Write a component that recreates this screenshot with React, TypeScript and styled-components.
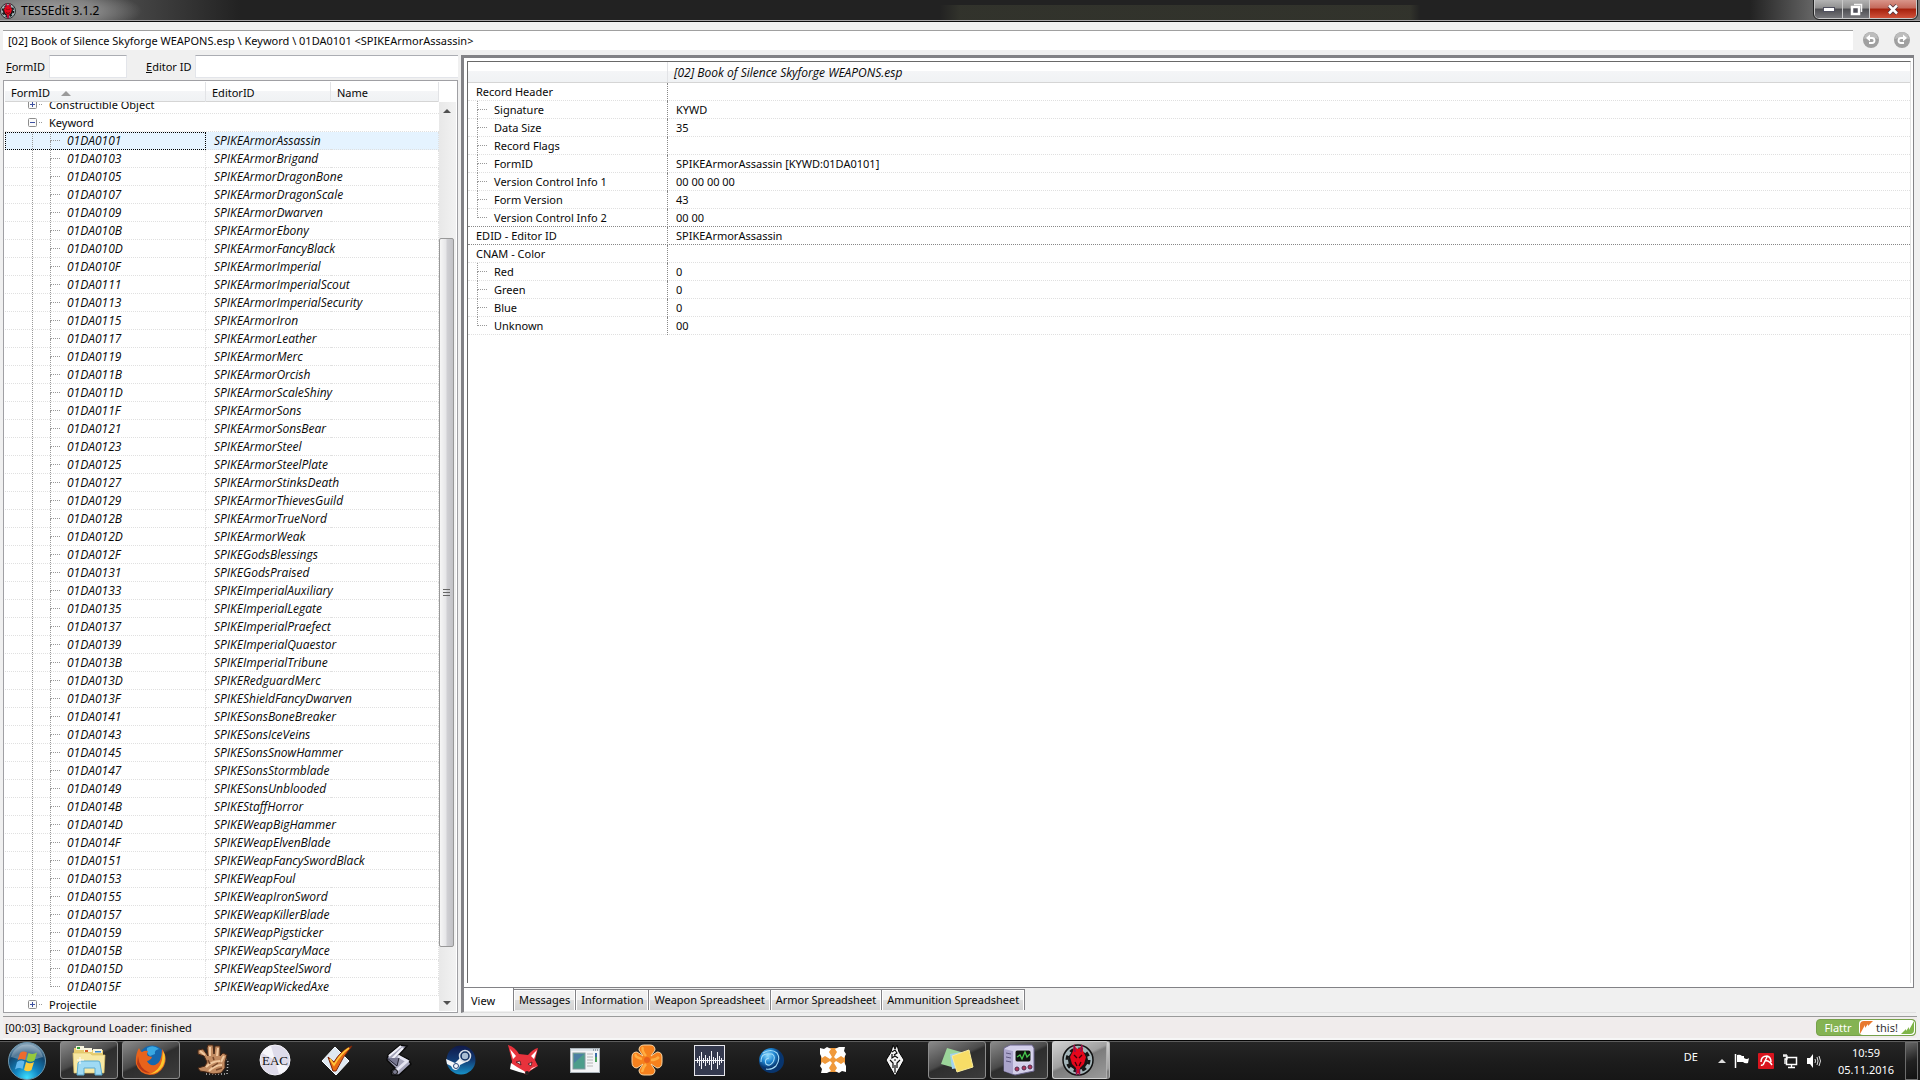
import React from 'react';
import styled, { createGlobalStyle, css } from 'styled-components';

const Global = createGlobalStyle`
  *, *::before, *::after { box-sizing: border-box; }
  html, body { margin: 0; }
  body { background: #f0f0f0; color: #080808; font: 11px/18px "Noto Sans", "Open Sans", sans-serif; overflow: hidden; }
  button, input { font: inherit; color: inherit; }
  button { padding: 0; border: 0; background: none; }
  svg { display: block; flex: none; }
`;

const italicText = css`
  font: italic 12px/18px "Open Sans", "Noto Sans", sans-serif;
`;

const Desktop = styled.div`
  min-height: 100vh;
  height: 100vh;
  display: flex;
  flex-direction: column;
`;

/* ---------- title bar ---------- */
const TitleBar = styled.header`
  flex: none;
  height: 22px;
  display: flex;
  justify-content: space-between;
  padding-right: 3px;
  border-bottom: 1px solid #0a0a0a;
  box-shadow: inset 0 -1px 0 #a5a3a5;
  background:
    radial-gradient(ellipse 90px 22px at 52px 11px, #a0a0a0, rgba(140, 140, 140, 0.8) 55%, transparent),
    linear-gradient(90deg, transparent 940px, rgba(60, 62, 50, 0.6) 960px, rgba(60, 62, 50, 0.6) 1410px, transparent 1420px) 0 5px no-repeat,
    linear-gradient(90deg, #6a6a6a, #4a4a4a 120px, #222 240px, #222 calc(100% - 170px), #6c6c6c calc(100% - 100px), #777);
`;
const AppTitle = styled.h1`
  margin: 0;
  display: flex;
  align-items: center;
  gap: 5px;
  font-size: 12px;
  line-height: 20px;
  font-weight: 400;
  color: #000;
`;
const Caption = styled.div`
  display: flex;
  height: 19px;
  border: 1px solid #c9c9c9;
  border-top: 0;
  border-radius: 0 0 5px 5px;
  overflow: hidden;
  outline: 1px solid #222;
`;
const CaptionButton = styled.button<{ $close?: boolean }>`
  width: ${p => (p.$close ? 47 : 27)}px;
  display: grid;
  place-items: center;
  background: ${p => p.$close
    ? 'linear-gradient(#d9958a, #c4685a 45%, #a5200c 50%, #d0513a)'
    : 'linear-gradient(#b4b4b4, #8f8f8f 45%, #4e4e52 50%, #77777b)'};
  & + & { border-left: 1px solid #c9c9c9; }
`;

/* ---------- path ---------- */
const PathRow = styled.div`
  flex: none;
  display: flex;
  align-items: center;
  gap: 10px;
  padding: 8px 10px 5px 3px;
`;
const PathInput = styled.input`
  flex: 1;
  height: 20px;
  padding: 0 5px;
  border: 0;
  border-top: 1px solid #a0a0a0;
  background: #fff;
  outline: 0;
`;
const NavButtons = styled.div`
  display: flex;
  gap: 15px;
`;

/* ---------- body ---------- */
const Body = styled.main`
  flex: 1;
  min-height: 0;
  display: flex;
  gap: 3px;
  padding: 0 4px 3px 3px;
`;
const Left = styled.section`
  width: 455px;
  flex: none;
  display: flex;
  flex-direction: column;
`;
const Filters = styled.form`
  display: flex;
  align-items: center;
  height: 25px;
  padding: 0 0 2px 3px;
`;
const FilterLabel = styled.label<{ $second?: boolean }>`
  width: ${p => (p.$second ? 49 : 43)}px;
  margin-left: ${p => (p.$second ? 19 : 0)}px;
  white-space: nowrap;
`;
const FilterInput = styled.input<{ $wide?: boolean }>`
  width: ${p => (p.$wide ? 'auto' : '78px')};
  flex: ${p => (p.$wide ? 1 : 'none')};
  min-width: 0;
  height: 23px;
  border: 1px solid #e3e5ea;
  border-top-color: #abadb3;
  ${p => p.$wide && 'border-right: 0;'}
  background: #fff;
  outline: 0;
`;

const headerFill = 'linear-gradient(#fff 45%, #f4f5f7 45%, #f0f2f4)';

const TreeBox = styled.div`
  flex: 1;
  min-height: 0;
  display: flex;
  flex-direction: column;
  border: 1px solid #a0a0a4;
  padding: 1px;
  background: #fff;
  overflow: hidden;
`;
const TreeArea = styled.div`
  flex: 1;
  min-height: 0;
  display: flex;
`;
const TreeScroll = styled.div`
  flex: 1;
  min-width: 0;
  overflow: hidden;
`;
const columns = css`
  display: grid;
  grid-template-columns: 201px 125px 1fr;
`;
const TreeTable = styled.table`
  display: block;
  border-spacing: 0;
  thead, tbody { display: block; }
`;
const TreeHead = styled.tr`
  ${columns}
  height: 20px;
  border-bottom: 1px solid #d5d5d5;
  background: ${headerFill};
`;
const TreeTh = styled.th`
  display: flex;
  align-items: center;
  gap: 11px;
  padding: 2px 6px 0;
  font-weight: 400;
  border-right: 1px solid #e2e3e6;
`;
const TreeRow = styled.tr<{ $selected?: boolean; $clipped?: boolean }>`
  ${columns}
  height: ${p => (p.$clipped ? 12 : 18)}px;
  align-content: end;
  overflow: hidden;
  background: ${p => (p.$selected ? '#e5f3ff' : 'transparent')};
`;
const TreeTd = styled.td<{ $focus?: boolean; $name?: boolean; $span?: boolean }>`
  display: flex;
  align-items: stretch;
  height: 18px;
  padding: 0 0 0 ${p => (p.$name ? 8 : 0)}px;
  border-bottom: 1px dotted #e0e0e0;
  border-right: ${p => (p.$span || p.$name ? '0' : '1px dotted #e0e0e0')};
  white-space: nowrap;
  ${p => (p.$span ? 'grid-column: 1 / -1;' : italicText)}
  ${p => p.$focus && 'outline: 1px dotted #000; outline-offset: -1px;'}
`;
const Indent = styled.span`
  width: 27px;
`;
const Guide = styled.span`
  width: 18px;
  border-left: 1px dotted #999;
`;
const Branch = styled.span<{ $last?: boolean }>`
  width: 17px;
  display: flex;
  flex-direction: column;
  &::before {
    content: '';
    width: 10px;
    height: 9px;
    border-left: 1px dotted #999;
    border-bottom: 1px dotted #999;
  }
  &::after {
    content: '';
    flex: 1;
    border-left: ${p => (p.$last ? '0' : '1px dotted #999')};
  }
`;
const Expander = styled.button`
  width: 21px;
  margin-left: 23px;
  display: flex;
  align-items: center;
`;

const Scrollbar = styled.div`
  width: 17px;
  flex: none;
  display: flex;
  flex-direction: column;
  margin-top: 20px;
  padding-right: 2px;
  background: linear-gradient(90deg, #e8e8e8, #f2f2f2);
`;
const ScrollButton = styled.button`
  height: 17px;
  display: grid;
  place-items: center;
`;
const Gap = styled.div<{ $grow: number }>`
  flex: ${p => p.$grow};
`;
const Thumb = styled.div`
  flex: 708;
  display: grid;
  place-items: center;
  border: 1px solid #989898;
  border-radius: 2px;
  background: linear-gradient(90deg, #f6f6f6, #e6e6e8 45%, #cfcfd3 55%, #c2c2c6);
`;

/* ---------- record view ---------- */
const Right = styled.section`
  flex: 1;
  min-width: 0;
  display: flex;
  flex-direction: column;
`;
const Page = styled.div`
  flex: 1;
  min-height: 0;
  border: 3px solid #828286;
  border-right: 1px solid #828286;
  border-bottom: 1px solid #828286;
  margin-right: 2px;
  padding: 3px 2px 4px 3px;
  background: #fff;
`;
const RecordBox = styled.div`
  height: 100%;
  border: 1px solid #696969;
  border-right-color: #e3e3e3;
  border-bottom: 0;
`;
const RecordTable = styled.table`
  display: block;
  border-spacing: 0;
  thead, tbody { display: block; }
`;
const recordColumns = css`
  display: grid;
  grid-template-columns: 200px 1fr;
`;
const RecordHead = styled.tr`
  ${recordColumns}
  height: 21px;
  border-bottom: 1px solid #d5d5d5;
  background: ${headerFill};
`;
const RecordTh = styled.th`
  ${italicText}
  padding: 2px 6px 0;
  text-align: left;
  &:first-child { border-right: 1px solid #e2e3e6; }
`;
const RecordRow = styled.tr<{ $strong?: boolean }>`
  ${recordColumns}
  height: 18px;
  border-bottom: 1px dotted ${p => (p.$strong ? '#888' : '#e0e0e0')};
`;
const RecordName = styled.td<{ $child?: boolean }>`
  display: flex;
  padding: 0 0 0 ${p => (p.$child ? 9 : 8)}px;
  border-right: 1px dotted #888;
`;
const RecordValue = styled.td`
  padding: 0 0 0 8px;
`;

const Tabs = styled.nav`
  flex: none;
  height: 25px;
  display: flex;
  align-items: flex-start;
  border-left: 3px solid #828286;
  border-bottom: 1px solid #e0e0e0;
`;
const Tab = styled.button<{ $active?: boolean }>`
  height: ${p => (p.$active ? 23 : 21)}px;
  margin-top: ${p => (p.$active ? 0 : 1)}px;
  padding: ${p => (p.$active ? '2px 18px 0 7px' : '0 5px')};
  line-height: 18px;
  border-right: 1px solid #828286;
  ${p => !p.$active && 'border-top: 1px solid #828286; box-shadow: inset 1px 1px 0 #fff, inset -1px 0 0 #fff;'}
  background: ${p => (p.$active ? '#fff' : 'linear-gradient(#f2f2f2 50%, #dedede 50%, #d3d3d3)')};
`;

/* ---------- status bar ---------- */
const StatusBar = styled.footer`
  flex: none;
  height: 24px;
  display: flex;
  align-items: flex-start;
  justify-content: space-between;
  margin: 0 3px;
  padding: 2px 1px 0 2px;
  border-top: 1px solid #9a9a9a;
  border-bottom: 2px solid #f6f6f6;
  background: #f0ecec;
`;
const Flattr = styled.a`
  display: flex;
  height: 17px;
  line-height: 15px;
  border: 1px solid #76a14a;
  border-radius: 4px;
  overflow: hidden;
  color: #fff;
  text-decoration: none;
  background: #84b352;
`;
const FlattrLeft = styled.span`
  width: 42px;
  text-align: center;
`;
const FlattrRight = styled.span`
  width: 56px;
  display: flex;
  justify-content: space-between;
  background: #fff;
  color: #333;
  border-radius: 4px;
`;

/* ---------- taskbar ---------- */
const Taskbar = styled.nav`
  flex: none;
  height: 40px;
  display: flex;
  padding-right: 2px;
  border-top: 1px solid #050505;
  box-shadow: inset 0 1px 0 #5c5c5c;
  background: linear-gradient(#262626, #1b1b1b 60%, #161616);
`;
const StartButton = styled.button`
  width: 60px;
  padding-left: 7px;
  display: flex;
  align-items: center;
`;
const Slots = styled.div`
  flex: 1;
  display: flex;
  gap: 4px;
`;
const Slot = styled.button<{ $state?: 'open' | 'active' }>`
  width: 58px;
  height: 38px;
  display: grid;
  place-items: center;
  border-radius: 3px;
  ${p => p.$state === 'open' && css`
    border: 1px solid #8c8c8c;
    background: linear-gradient(155deg, #8a8a8a, #4a4a4a 45%, #2e2e2e 50%, #3c3c3c);
  `}
  ${p => p.$state === 'active' && css`
    padding-right: 3px;
    border: 1px solid #d0d0d0;
    border-right: 4px double #b0b0b0;
    background: linear-gradient(155deg, #d2d2d2, #a0a0a0 45%, #7c7c7c 50%, #9a9a9a);
  `}
`;
const Tray = styled.div`
  display: flex;
  align-items: center;
  gap: 8px;
  color: #fff;
`;
const Language = styled.button`
  height: 26px;
  margin-right: 12px;
  align-self: flex-start;
  line-height: 32px;
`;
const Clock = styled.time`
  width: 62px;
  margin: 0 0 0 5px;
  text-align: center;
  line-height: 17px;
`;
const ShowDesktop = styled.button`
  width: 13px;
  height: 38px;
  border: 1px solid #6c6c6c;
  background: linear-gradient(160deg, #666, #222 50%, #111);
`;

/* ---------- data ---------- */
const editorIds = [
  'ArmorAssassin', 'ArmorBrigand', 'ArmorDragonBone', 'ArmorDragonScale', 'ArmorDwarven', 'ArmorEbony',
  'ArmorFancyBlack', 'ArmorImperial', 'ArmorImperialScout', 'ArmorImperialSecurity', 'ArmorIron', 'ArmorLeather',
  'ArmorMerc', 'ArmorOrcish', 'ArmorScaleShiny', 'ArmorSons', 'ArmorSonsBear', 'ArmorSteel', 'ArmorSteelPlate',
  'ArmorStinksDeath', 'ArmorThievesGuild', 'ArmorTrueNord', 'ArmorWeak', 'GodsBlessings', 'GodsPraised',
  'ImperialAuxiliary', 'ImperialLegate', 'ImperialPraefect', 'ImperialQuaestor', 'ImperialTribune', 'RedguardMerc',
  'ShieldFancyDwarven', 'SonsBoneBreaker', 'SonsIceVeins', 'SonsSnowHammer', 'SonsStormblade', 'SonsUnblooded',
  'StaffHorror', 'WeapBigHammer', 'WeapElvenBlade', 'WeapFancySwordBlack', 'WeapFoul', 'WeapIronSword',
  'WeapKillerBlade', 'WeapPigsticker', 'WeapScaryMace', 'WeapSteelSword', 'WeapWickedAxe',
];
const keywords = editorIds.map((name, i) => ({
  formId: '01DA0' + (0x101 + i * 2).toString(16).toUpperCase(),
  editorId: 'SPIKE' + name,
}));

type Field = { name: string; value?: string; child?: boolean; last?: boolean; strong?: boolean };
const fields: Field[] = [
  { name: 'Record Header' },
  { name: 'Signature', value: 'KYWD', child: true },
  { name: 'Data Size', value: '35', child: true },
  { name: 'Record Flags', child: true },
  { name: 'FormID', value: 'SPIKEArmorAssassin [KYWD:01DA0101]', child: true },
  { name: 'Version Control Info 1', value: '00 00 00 00', child: true },
  { name: 'Form Version', value: '43', child: true },
  { name: 'Version Control Info 2', value: '00 00', child: true, last: true, strong: true },
  { name: 'EDID - Editor ID', value: 'SPIKEArmorAssassin', strong: true },
  { name: 'CNAM - Color' },
  { name: 'Red', value: '0', child: true },
  { name: 'Green', value: '0', child: true },
  { name: 'Blue', value: '0', child: true },
  { name: 'Unknown', value: '00', child: true, last: true },
];
const tabs = ['View', 'Messages', 'Information', 'Weapon Spreadsheet', 'Armor Spreadsheet', 'Ammunition Spreadsheet'];

/* ---------- drawings ---------- */
const EditIcon = ({ size }: { size: number }) => (
  <svg width={size} height={size} viewBox="0 0 32 32">
    <circle cx="16" cy="16" r="15" fill="#a3b4b8" stroke="#111" strokeWidth="1.5" />
    <circle cx="16" cy="16" r="8" fill="none" stroke="#151515" strokeWidth="4" />
    <circle cx="16" cy="16" r="11" fill="none" stroke="#151515" strokeWidth="3" strokeDasharray="4.3 4.34" />
    <path d="M12 0 L14 4 L16 5 L18 4 L20 0 L21 7 L24 13 L22 20 L18 24 L18 31 L16 29 L14 31 L14 24 L10 20 L8 13 L11 7Z" fill="#e5071c" />
    <path d="M12 1 L13 8 M20 1 L19 8 M14.500 31 V25 M17.500 31 V25" stroke="#8a1552" strokeWidth="1.500" fill="none" />
    <path d="M12 11 L15 14 M20 11 L17 14 M13 18 L15 22 M19 18 L17 22" stroke="#3a0208" strokeWidth="1.300" fill="none" />
  </svg>
);
const NavIcon = ({ flip }: { flip?: boolean }) => (
  <svg width="16" height="16" viewBox="0 0 16 16">
    <circle cx="8" cy="8" r="8" fill="#a0a0a0" />
    <path d="M1 7 A7 7 0 0 1 15 7 Q8 4 1 7Z" fill="#bdbdbd" />
    <g transform={flip ? 'translate(16 0) scale(-1 1)' : undefined}>
      <path d="M6 6 H9 A2.500 2.500 0 0 1 9 11 H6" fill="none" stroke="#fff" strokeWidth="1.800" />
      <path d="M3 6 L7 2.500 V9.500Z" fill="#fff" />
    </g>
  </svg>
);
const BoxIcon = ({ plus }: { plus?: boolean }) => (
  <svg width="15" height="9" viewBox="0 0 15 9">
    <rect x=".5" y=".5" width="8" height="8" rx="1" fill="#fafafa" stroke="#8c8c8c" />
    <path d={plus ? 'M2 4.500 H7 M4.500 2 V7' : 'M2 4.500 H7'} stroke="#3c50a0" />
    <path d="M11 4.500 H15" stroke="#999" strokeDasharray="1 1" />
  </svg>
);
const Arrow = ({ down }: { down?: boolean }) => (
  <svg width="8" height="4" viewBox="0 0 8 4">
    <path d={down ? 'M0 0 H8 L4 4Z' : 'M0 4 H8 L4 0Z'} fill="#505050" />
  </svg>
);

const Orb = () => (
  <svg width="40" height="38" viewBox="0 0 40 38">
    <defs>
      <radialGradient id="orb" cx=".5" cy=".95" r=".9">
        <stop offset="0" stopColor="#3fe0ff" /><stop offset=".35" stopColor="#1287c4" /><stop offset=".75" stopColor="#12466f" /><stop offset="1" stopColor="#7f9fb6" />
      </radialGradient>
    </defs>
    <circle cx="20" cy="19" r="18.500" fill="url(#orb)" stroke="#6e97ae" />
    <path d="M4 15 A16.500 16.500 0 0 1 36 15 Q20 21 4 15Z" fill="#fff" opacity=".28" />
    <path d="M13 11 Q16 8.500 20 10.500 L18 18 Q14 16 10.500 18.500Z" fill="#ee6b2c" />
    <path d="M21.500 11 Q26 13 30 10.500 L27.500 18.500 Q23.500 21 19.500 18.500Z" fill="#95c93d" />
    <path d="M10 20 Q14 17.500 17.500 19.500 L15.500 27 Q12 25 8 27.500Z" fill="#62b8ee" />
    <path d="M19 20 Q23 22.500 27 20 L24.500 28 Q21 30.500 17 28Z" fill="#fccb3b" />
  </svg>
);
const Explorer = () => (
  <svg width="34" height="32" viewBox="0 0 34 32">
    <path d="M2 4 H11 L13 6 H31 V27 H2Z" fill="#e7cd70" />
    <path d="M4 2 H12 V6 H4Z M12 4 H20 V8 H12Z M21 5 H30 V9 H21Z" fill="#f9f5df" />
    <path d="M5 3 H8 V5 H5Z" fill="#31a038" /><path d="M13 6 H16 V8 H13Z" fill="#d45a27" /><path d="M23 7 H29 V8.500 H23Z" fill="#3e8dd0" />
    <path d="M1 9 H18 L20 11 H33 L32 29 H2Z" fill="#f7e8a4" stroke="#dcc169" strokeWidth=".7" />
    <path d="M6 19 Q7 17 9 17 H26 Q28 17 28 19 L30 31 H23 V24 H12 V31 H5Z" fill="#9fdaf3" stroke="#5aa9cf" />
    <path d="M8 13 V20 M5 16 H12" stroke="#fff" strokeWidth="1" />
  </svg>
);
const Firefox = () => (
  <svg width="32" height="32" viewBox="0 0 32 32">
    <circle cx="17" cy="15" r="13.500" fill="#1667ad" />
    <path d="M12 4 Q18 0 24 5 Q19 6 20 10 L15 12 Q11 9 12 4Z" fill="#39a8e2" />
    <path d="M27 5 Q33 13 29 22 Q24 31 15 31 Q4 30 1 20 Q0 11 4 4 Q5 7 7 8 Q10 6 13 7 Q11 10 13 12 L17 13 Q16 16 12 17 Q14 22 20 21 Q27 19 27 5Z" fill="#e8631b" />
    <path d="M28 7 Q32 14 28 22 Q23 30 15 30 Q25 26 27 16Z" fill="#fbc62d" />
    <path d="M3 12 Q4 25 15 29 Q6 29 2 20Z" fill="#b93816" />
  </svg>
);
const Hand = () => (
  <svg width="34" height="34" viewBox="0 0 34 34">
    <path d="M10 31 L31 31 L32 19 L28 14" fill="none" stroke="#bbb" strokeWidth="1.500" strokeDasharray="1 2" />
    <path d="M10 29 L4 28 L2 25 L9 23 L11 19 L8 13 L2 11 L2 7 L7 6 L12 13 L11 5 L12 2 L17 2 L18 11 L19 3 L24 3 L24 13 L27 10 L31 12 L29 19 L29 25 L25 30 L17 31Z" fill="#c18a60" stroke="#452615" />
    <path d="M10 24 Q16 18 24 18 M13 28 Q19 22 26 22 M4 8 L9 12 M14 4 V13 M22 5 L21 13 M28 13 L25 19" fill="none" stroke="#f1c9a0" strokeWidth="2" />
    <path d="M12 17 L14 21 M17 14 L18 17 M20 27 L26 25 M16 24 L22 20" stroke="#77482b" strokeWidth="1.500" />
  </svg>
);
const Eac = () => (
  <svg width="32" height="32" viewBox="0 0 32 32">
    <circle cx="16" cy="16" r="15" fill="#dedbea" stroke="#f5f3fa" />
    <path d="M16 16 L3 9 A15 15 0 0 1 12 2Z M16 16 L29 23 A15 15 0 0 1 20 30Z" fill="#f7f6fb" />
    <text x="16" y="21" textAnchor="middle" fontFamily="Liberation Serif, serif" fontSize="13" fill="#111">EAC</text>
  </svg>
);
const Check = () => (
  <svg width="32" height="32" viewBox="0 0 32 32">
    <path d="M14 3 L28 17 L15 31 L1 17Z" fill="#dfe9f2" stroke="#f8fcff" />
    <path d="M7 13 L13 18 Q20 6 31 2 Q22 12 15 27 H12Z" fill="#e86a12" stroke="#7c2308" />
    <path d="M9 15 L13 21 Q20 9 28 4" fill="none" stroke="#ffc83c" strokeWidth="1.500" />
  </svg>
);
const Scroll = () => (
  <svg width="32" height="34" viewBox="0 0 32 34">
    <path d="M5 12 L17 2 L24 3 L16 12 L25 16 L28 21 L16 32 L9 32 L8 28 L12 25 L4 17Z" fill="#a5a5ba" stroke="#0a0a0a" strokeWidth="1.500" />
    <path d="M6 13 L18 3 M9 16 L20 5" stroke="#f2f2fa" strokeWidth="2" />
    <path d="M15 13 L24 18 L14 27" fill="none" stroke="#e5e5f2" strokeWidth="3" />
    <path d="M4 15 L14 23 L16 15" fill="#777790" stroke="#202030" /><circle cx="12" cy="29" r="2.500" fill="#77778c" stroke="#111" />
  </svg>
);
const Steam = () => (
  <svg width="30" height="30" viewBox="0 0 30 30">
    <defs><linearGradient id="steam" x2="0" y2="1"><stop stopColor="#10194a" /><stop offset=".5" stopColor="#123a72" /><stop offset="1" stopColor="#1791c8" /></linearGradient></defs>
    <circle cx="15" cy="15" r="14.500" fill="url(#steam)" />
    <path d="M0 14 L9 18 L14 13 L22 16 L14 20 Q13 25 9 25 Q6 24 5 21 L1 19Z" fill="#f3f5f8" />
    <circle cx="19" cy="11" r="5.500" fill="#123061" stroke="#d8dfe8" strokeWidth="1.500" /><circle cx="19" cy="11" r="3.200" fill="#a9bdd2" /><circle cx="10" cy="21" r="2.500" fill="none" stroke="#24447a" />
  </svg>
);
const Fox = () => (
  <svg width="32" height="32" viewBox="0 0 32 32">
    <path d="M1 1 Q8 3 12 10 L21 11 Q26 5 31 4 L28 16 L31 22 L23 27 L20 31 L13 27 L4 25 L5 17Z" fill="#e8323c" />
    <path d="M3 5 L9 12 L6 15Z M30 6 L24 12 L27 15Z M4 19 L10 23 L17 27 L20 30 L12 28 L3 25Z M30 22 L25 24 L22 27Z" fill="#fff" />
    <path d="M9 18 L13 17 L14 21Z M21 20 L25 18 L24 22Z" fill="#d6e2e8" stroke="#531118" strokeWidth=".8" /><circle cx="20" cy="29" r="2" fill="#222" />
  </svg>
);
const Program = () => (
  <svg width="30" height="25" viewBox="0 0 30 25">
    <rect x=".5" y=".5" width="29" height="24" fill="#f3f4f6" stroke="#a9b2b8" />
    <path d="M1 1 H29 V3 H1Z" fill="#dde4ea" /><path d="M23 2 H28" stroke="#56616b" strokeDasharray="1 1" />
    <rect x="3" y="5" width="12" height="16" fill="#4d9d8b" stroke="#8597a0" /><path d="M4 6 H14 L4 15Z" fill="#4c7fa4" />
    <path d="M17 6 H23 M17 9 H23 M17 12 H23 M17 15 H23 M17 18 H23" stroke="#b6b6b6" />
    <rect x="25" y="5" width="2" height="9" fill="#3a6da7" /><rect x="25" y="9" width="2" height="5" fill="#48a05a" />
  </svg>
);
const Clover = () => (
  <svg width="32" height="32" viewBox="0 0 32 32">
    <path d="M12 12 L8 6 Q8 1 13 1 H19 Q24 1 24 6 L20 12 L26 8 Q31 8 31 13 V18 Q31 24 26 24 L20 20 L24 26 Q24 31 19 31 H13 Q8 31 8 26 L12 20 L6 24 Q1 24 1 18 V13 Q1 8 6 8Z" fill="#f6811d" stroke="#fbd6a3" />
    <path d="M12 3 Q10 6 15 12 M5 10 Q3 13 11 15 M11 28 Q12 23 15 20 M28 13 Q25 16 20 16" fill="none" stroke="#ffae42" strokeWidth="2.500" />
    <circle cx="16" cy="16" r="3" fill="#e8601b" />
  </svg>
);
const Wave = () => (
  <svg width="31" height="31" viewBox="0 0 31 31">
    <rect x=".5" y=".5" width="30" height="30" fill="#34394e" stroke="#e9e9ee" />
    <path d="M1 15.500 H30 M3.500 13 V18 M5.500 11 V21 M7.500 7 V24 M9.500 13 V18 M11.500 10 V21 M13.500 13 V18 M15.500 11 V20 M17.500 6 V25 M19.500 12 V19 M21.500 13 V18 M23.500 7 V24 M25.500 11 V20 M27.500 13 V18" stroke="#f3f3f8" />
  </svg>
);
const BlueBall = () => (
  <svg width="27" height="27" viewBox="0 0 27 27">
    <defs><radialGradient id="ball" cx=".35" cy=".3"><stop stopColor="#8edcff" /><stop offset=".55" stopColor="#1f86d2" /><stop offset="1" stopColor="#08356e" /></radialGradient></defs>
    <circle cx="13.500" cy="13.500" r="12.500" fill="url(#ball)" />
    <path d="M3 15 Q3 7 9 7 H14 Q18 9 15 15 Q12 20 8 17 Q6 12 11 11 M5 6 Q13 1 19 6 Q23 12 18 19 Q14 23 8 22" fill="none" stroke="#a5ddf8" strokeWidth="1.100" />
  </svg>
);
const Nexus = () => (
  <svg width="30" height="30" viewBox="0 0 30 30">
    <rect x="3" y="3" width="24" height="24" rx="9" fill="#f0993a" />
    <path id="nexus-arrow" d="M2 3 L6 4 L9 2 L13 4 L11 7 L14 12 L12 14 L7 11 L4 13 L2 9Z" fill="#fff" />
    <g fill="#fff">
      <path transform="rotate(90 15 15)" d="M2 3 L6 4 L9 2 L13 4 L11 7 L14 12 L12 14 L7 11 L4 13 L2 9Z" />
      <path transform="rotate(180 15 15)" d="M2 3 L6 4 L9 2 L13 4 L11 7 L14 12 L12 14 L7 11 L4 13 L2 9Z" />
      <path transform="rotate(270 15 15)" d="M2 3 L6 4 L9 2 L13 4 L11 7 L14 12 L12 14 L7 11 L4 13 L2 9Z" />
    </g>
  </svg>
);
const Skyrim = () => (
  <svg width="20" height="34" viewBox="0 0 20 34">
    <path d="M8 2 L10 6 L12 2 L14 9 L19 17 L14 26 L10 33 L6 26 L1 17 L6 9Z" fill="#f4f4f4" stroke="#000" />
    <path d="M7 9 L10 7 L12 10 L9 12 M7 11 V15 L10 13 L13 15 M5 17 L8 20 V25 M15 17 L12 20 V25 M10 22 V30 M9 17 H11" fill="none" stroke="#080808" strokeWidth="1.200" />
  </svg>
);
const Notes = () => (
  <svg width="34" height="28" viewBox="0 0 34 28">
    <path d="M7 2 L21 6 L15 22 L1 18Z" fill="#9bd59a" /><path d="M10 8 L22 6 L25 21 L12 23Z" fill="#a2d2ef" /><path d="M12 10 L29 4 L33 21 L17 26Z" fill="#f7dd66" stroke="#f9ec9e" />
  </svg>
);
const Scope = () => (
  <svg width="34" height="32" viewBox="0 0 34 32">
    <path d="M2 4 L8 1 H30 L32 4 V27 L13 31 L2 27Z" fill="#d3cfea" stroke="#6a648c" />
    <path d="M2 5 L11 7 V30 L2 27Z" fill="#aaa4cb" /><path d="M4 9 L9 10 M4 13 L9 14 M4 17 L9 18" stroke="#5d5780" />
    <rect x="13" y="6" width="16" height="12" rx="2" fill="#101510" stroke="#e6e2f6" />
    <path d="M15 13 L18 11 L20 15 L23 8 L25 13 L28 10" fill="none" stroke="#47c84d" strokeWidth="1.300" />
    <g fill="#b6355a" stroke="#51304f"><circle cx="15" cy="25" r="2" /><circle cx="22" cy="24" r="2" /><circle cx="28" cy="23" r="2" /></g>
  </svg>
);

type App = { label: string; icon: React.ReactNode; state?: 'open' | 'active' };
const apps: App[] = [
  { label: 'Explorer', icon: <Explorer />, state: 'open' },
  { label: 'Firefox', icon: <Firefox />, state: 'open' },
  { label: 'Hand', icon: <Hand /> },
  { label: 'Exact Audio Copy', icon: <Eac /> },
  { label: 'Check', icon: <Check /> },
  { label: 'Scroll', icon: <Scroll /> },
  { label: 'Steam', icon: <Steam /> },
  { label: 'Fox', icon: <Fox /> },
  { label: 'Program', icon: <Program /> },
  { label: 'Clover', icon: <Clover /> },
  { label: 'Audio editor', icon: <Wave /> },
  { label: 'Globe', icon: <BlueBall /> },
  { label: 'Mod manager', icon: <Nexus /> },
  { label: 'Skyrim', icon: <Skyrim /> },
  { label: 'Notes', icon: <Notes />, state: 'open' },
  { label: 'Monitor', icon: <Scope />, state: 'open' },
  { label: 'TES5Edit', icon: <EditIcon size={32} />, state: 'active' },
];

export default function App() {
  return (
    <Desktop>
      <Global />
      <TitleBar>
        <AppTitle><EditIcon size={16} />TES5Edit 3.1.2</AppTitle>
        <Caption>
          <CaptionButton aria-label="Minimize">
            <svg width="12" height="5" viewBox="0 0 12 5"><rect x=".5" y=".5" width="11" height="4" fill="#fff" stroke="#505060" /></svg>
          </CaptionButton>
          <CaptionButton aria-label="Restore">
            <svg width="13" height="13" viewBox="0 0 13 13">
              <path d="M4 1.500 H11.500 V9" fill="none" stroke="#f4f4f4" strokeWidth="1.500" />
              <rect x="2" y="4" width="7" height="7" fill="#50505a" stroke="#fff" strokeWidth="2.500" />
            </svg>
          </CaptionButton>
          <CaptionButton $close aria-label="Close">
            <svg width="12" height="11" viewBox="0 0 12 11">
              <path d="M2 1.500 L10 9.500 M10 1.500 L2 9.500" stroke="#4b3540" strokeWidth="4" />
              <path d="M2 1.500 L10 9.500 M10 1.500 L2 9.500" stroke="#fff" strokeWidth="2.500" />
            </svg>
          </CaptionButton>
        </Caption>
      </TitleBar>

      <PathRow>
        <PathInput aria-label="Path" readOnly value={'[02] Book of Silence Skyforge WEAPONS.esp \\ Keyword \\ 01DA0101 <SPIKEArmorAssassin>'} />
        <NavButtons>
          <button aria-label="Back"><NavIcon /></button>
          <button aria-label="Forward"><NavIcon flip /></button>
        </NavButtons>
      </PathRow>

      <Body>
        <Left>
          <Filters>
            <FilterLabel htmlFor="form-id"><u>F</u>ormID</FilterLabel>
            <FilterInput id="form-id" />
            <FilterLabel $second htmlFor="editor-id"><u>E</u>ditor ID</FilterLabel>
            <FilterInput $wide id="editor-id" />
          </Filters>
          <TreeBox>
            <TreeArea>
              <TreeScroll>
                <TreeTable>
                  <thead>
                    <TreeHead>
                      <TreeTh>FormID<svg width="10" height="5" viewBox="0 0 10 5"><path d="M0 5 H10 L5 0Z" fill="#9a9a9a" /></svg></TreeTh>
                      <TreeTh>EditorID</TreeTh>
                      <TreeTh>Name</TreeTh>
                    </TreeHead>
                  </thead>
                  <tbody>
                    <TreeRow $clipped>
                      <TreeTd $span><Expander aria-label="Expand"><BoxIcon plus /></Expander>Constructible Object</TreeTd>
                    </TreeRow>
                    <TreeRow>
                      <TreeTd $span><Expander aria-label="Collapse"><BoxIcon /></Expander>Keyword</TreeTd>
                    </TreeRow>
                    {keywords.map((k, i) => (
                      <TreeRow key={k.formId} $selected={i === 0}>
                        <TreeTd $focus={i === 0}>
                          <Indent /><Guide /><Branch $last={i === keywords.length - 1} />{k.formId}
                        </TreeTd>
                        <TreeTd $name>{k.editorId}</TreeTd>
                        <TreeTd />
                      </TreeRow>
                    ))}
                    <TreeRow>
                      <TreeTd $span><Expander aria-label="Expand"><BoxIcon plus /></Expander>Projectile</TreeTd>
                    </TreeRow>
                  </tbody>
                </TreeTable>
              </TreeScroll>
              <Scrollbar>
                <ScrollButton aria-label="Scroll up"><Arrow /></ScrollButton>
                <Gap $grow={119} />
                <Thumb>
                  <svg width="7" height="8" viewBox="0 0 7 8"><path d="M0 1.500 H7 M0 4.500 H7 M0 7.500 H7" stroke="#666" /></svg>
                </Thumb>
                <Gap $grow={47} />
                <ScrollButton aria-label="Scroll down"><Arrow down /></ScrollButton>
              </Scrollbar>
            </TreeArea>
          </TreeBox>
        </Left>

        <Right>
          <Page>
            <RecordBox>
              <RecordTable>
                <thead>
                  <RecordHead>
                    <RecordTh />
                    <RecordTh>[02] Book of Silence Skyforge WEAPONS.esp</RecordTh>
                  </RecordHead>
                </thead>
                <tbody>
                  {fields.map(f => (
                    <RecordRow key={f.name} $strong={f.strong}>
                      <RecordName $child={f.child}>
                        {f.child && <Branch $last={f.last} />}{f.name}
                      </RecordName>
                      <RecordValue>{f.value}</RecordValue>
                    </RecordRow>
                  ))}
                </tbody>
              </RecordTable>
            </RecordBox>
          </Page>
          <Tabs>
            {tabs.map((t, i) => <Tab key={t} $active={i === 0}>{t}</Tab>)}
          </Tabs>
        </Right>
      </Body>

      <StatusBar>
        <span>[00:03] Background Loader: finished</span>
        <Flattr href="#flattr">
          <FlattrLeft>Flattr</FlattrLeft>
          <FlattrRight>
            <svg width="14" height="15" viewBox="0 0 14 15"><path d="M1 14 V5 Q1 1 5 1 H14 L9 6 V4 L6 8 V5 Z" fill="#e8792e" /></svg>
            this!
            <svg width="14" height="15" viewBox="0 0 14 15"><path d="M13 1 V10 Q13 14 9 14 H0 L5 9 V11 L8 7 V10Z" fill="#7fb548" /></svg>
          </FlattrRight>
        </Flattr>
      </StatusBar>

      <Taskbar>
        <StartButton aria-label="Start"><Orb /></StartButton>
        <Slots>
          {apps.map(a => <Slot key={a.label} aria-label={a.label} $state={a.state}>{a.icon}</Slot>)}
        </Slots>
        <Tray>
          <Language>DE</Language>
          <svg width="8" height="4" viewBox="0 0 8 4"><path d="M0 4 H8 L4 0Z" fill="#ddd" /></svg>
          <svg width="16" height="16" viewBox="0 0 16 16"><path d="M1.500 1 V15" stroke="#fff" strokeWidth="1.500" /><path d="M3 2 Q6 1 8 3 H10 V5 Q13 7 15 5 L14 10 Q11 11 9 9 H3Z" fill="#fff" /></svg>
          <svg width="16" height="16" viewBox="0 0 16 16"><rect width="16" height="16" rx="1" fill="#d9141e" /><path d="M3 9 Q3 3 9 3 Q13 4 13 9 M9 4 L6 10 Q5 13 3 12 M7 8 Q11 7 14 12" fill="none" stroke="#fff" strokeWidth="1.500" /></svg>
          <svg width="16" height="16" viewBox="0 0 16 16"><rect x="4.500" y="4.500" width="10" height="7" fill="none" stroke="#fff" strokeWidth="1.500" /><path d="M9.500 12 V14 M6 14.500 H13 M1 3 H5 V6 H3 V11 M2 1 V3 M4 1 V3" fill="none" stroke="#fff" strokeWidth="1.300" /></svg>
          <svg width="16" height="16" viewBox="0 0 16 16"><path d="M1 5 H4 L7 1 V15 L4 11 H1Z" fill="#fff" /><path d="M9 6 Q10 8 9 10 M11 4 Q13 8 11 12 M13 3 Q16 8 13 13" fill="none" stroke="#ddd" /></svg>
          <Clock dateTime="2016-11-05T10:59">10:59<br />05.11.2016</Clock>
          <ShowDesktop aria-label="Show desktop" />
        </Tray>
      </Taskbar>
    </Desktop>
  );
}
